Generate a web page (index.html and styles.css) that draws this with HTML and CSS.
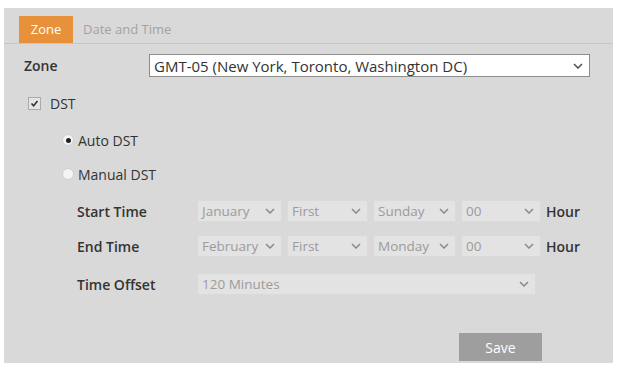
FILE: index.html
```html
<!DOCTYPE html>
<html lang="en">
<head>
    <meta charset="UTF-8">
    <meta name="viewport" content="width=device-width, initial-scale=1.0">
    <title>Zone</title>
    <link rel="stylesheet" href="styles.css">
</head>
<body>
    <div class="panel">
        <div class="tabs">
            <span class="tab active">Zone</span>
            <span class="tab">Date and Time</span>
        </div>
        <div class="form">
            <div class="zone-row">
                <span class="zone-label">Zone</span>
                <div class="select zone-select">
                    <span>GMT-05 (New York, Toronto, Washington DC)</span>
                    <svg class="chevron" width="10" height="6" viewBox="0 0 10 6"><path d="M1 1 L5 5 L9 1" fill="none" stroke="#555" stroke-width="1.6"/></svg>
                </div>
            </div>
            <div class="check-row">
                <span class="checkbox"><svg width="9" height="9" viewBox="0 0 9 9"><path d="M1.5 4.5 L3.6 6.8 L7.5 2" fill="none" stroke="#333" stroke-width="1.6"/></svg></span>
                <span>DST</span>
            </div>
            <div class="radio-row first">
                <span class="radio checked"></span>
                <span>Auto DST</span>
            </div>
            <div class="radio-row">
                <span class="radio"></span>
                <span>Manual DST</span>
            </div>
            <div class="dst-row start">
                <span class="dst-label">Start Time</span>
                <div class="select off month"><span>January</span><svg class="chevron" width="10" height="6" viewBox="0 0 10 6"><path d="M1 1 L5 5 L9 1" fill="none" stroke="#8a8a8a" stroke-width="1.5"/></svg></div>
                <div class="select off week"><span>First</span><svg class="chevron" width="10" height="6" viewBox="0 0 10 6"><path d="M1 1 L5 5 L9 1" fill="none" stroke="#8a8a8a" stroke-width="1.5"/></svg></div>
                <div class="select off day"><span>Sunday</span><svg class="chevron" width="10" height="6" viewBox="0 0 10 6"><path d="M1 1 L5 5 L9 1" fill="none" stroke="#8a8a8a" stroke-width="1.5"/></svg></div>
                <div class="select off hour"><span>00</span><svg class="chevron" width="10" height="6" viewBox="0 0 10 6"><path d="M1 1 L5 5 L9 1" fill="none" stroke="#8a8a8a" stroke-width="1.5"/></svg></div>
                <span class="unit">Hour</span>
            </div>
            <div class="dst-row">
                <span class="dst-label">End Time</span>
                <div class="select off month"><span class="clip">February</span><svg class="chevron" width="10" height="6" viewBox="0 0 10 6"><path d="M1 1 L5 5 L9 1" fill="none" stroke="#8a8a8a" stroke-width="1.5"/></svg></div>
                <div class="select off week"><span>First</span><svg class="chevron" width="10" height="6" viewBox="0 0 10 6"><path d="M1 1 L5 5 L9 1" fill="none" stroke="#8a8a8a" stroke-width="1.5"/></svg></div>
                <div class="select off day"><span>Monday</span><svg class="chevron" width="10" height="6" viewBox="0 0 10 6"><path d="M1 1 L5 5 L9 1" fill="none" stroke="#8a8a8a" stroke-width="1.5"/></svg></div>
                <div class="select off hour"><span>00</span><svg class="chevron" width="10" height="6" viewBox="0 0 10 6"><path d="M1 1 L5 5 L9 1" fill="none" stroke="#8a8a8a" stroke-width="1.5"/></svg></div>
                <span class="unit">Hour</span>
            </div>
            <div class="dst-row offset">
                <span class="dst-label">Time Offset</span>
                <div class="select off offset-select"><span>120 Minutes</span><svg class="chevron" width="10" height="6" viewBox="0 0 10 6"><path d="M1 1 L5 5 L9 1" fill="none" stroke="#8a8a8a" stroke-width="1.5"/></svg></div>
            </div>
            <div class="actions">
                <button class="save">Save</button>
            </div>
        </div>
    </div>
</body>
</html>
```

FILE: styles.css
```css
body {
    margin: 0;
    padding: 8px 5px 2px 4px;
    background-color: #fff;
    font-family: "Open Sans", Arial, sans-serif;
    color: #333;
}
.panel {
    background-color: #d9d9d9;
    height: 355px;
    box-sizing: border-box;
}
.tabs {
    display: flex;
    align-items: flex-end;
    height: 36px;
    padding-left: 15px;
    border-bottom: 1px solid #c6c6c6;
    box-sizing: border-box;
}
.tab {
    font-size: 13px;
    color: #a3a3a3;
    padding: 0 10px;
    height: 27px;
    line-height: 27px;
}
.tab.active {
    background-color: #e8913b;
    color: #fff;
    width: 54px;
    padding: 0;
    text-align: center;
}
.form {
    padding-left: 20px;
}
.zone-row {
    display: flex;
    align-items: center;
    margin-top: 10px;
}
.zone-label {
    width: 125px;
    font-size: 14px;
    font-weight: 600;
}
.select {
    display: flex;
    align-items: center;
    justify-content: space-between;
    box-sizing: border-box;
    height: 22px;
    padding: 0 6px 0 4px;
    overflow: hidden;
    white-space: nowrap;
}
.zone-select {
    width: 441px;
    height: 23px;
    background-color: #fff;
    border: 1px solid #8d8d8d;
    font-size: 15px;
    color: #333;
}
.check-row, .radio-row {
    display: flex;
    align-items: center;
    height: 20px;
    font-size: 14px;
}
.check-row {
    margin-top: 16px;
    padding-left: 4px;
}
.checkbox {
    width: 11px;
    height: 11px;
    border: 1px solid #ababab;
    background-color: #e4e4e4;
    display: flex;
    align-items: center;
    justify-content: center;
    margin-right: 9px;
}
.radio-row {
    padding-left: 38px;
    margin-top: 14px;
}
.radio-row.first {
    margin-top: 17px;
}
.radio {
    width: 10px;
    height: 10px;
    border-radius: 50%;
    background-color: #f4f4f4;
    border: 1px solid #cfcfcf;
    margin-right: 4px;
    display: flex;
    align-items: center;
    justify-content: center;
}
.radio.checked::after {
    content: "";
    width: 5px;
    height: 5px;
    border-radius: 50%;
    background-color: #222;
}
.dst-row {
    display: flex;
    align-items: center;
    gap: 5px;
    padding-left: 53px;
    margin-top: 13px;
}
.dst-row.start {
    margin-top: 16px;
}
.dst-row.offset {
    margin-top: 16px;
}
.dst-label {
    width: 115px;
    font-size: 14px;
    font-weight: 600;
}
.select.off {
    background-color: #e3e3e3;
    border: 1px solid #dadada;
    font-size: 13.5px;
    color: #9b9b9b;
}
.clip {
    width: 58px;
    overflow: hidden;
}
.month { width: 85px; }
.week { width: 81px; }
.day { width: 83px; }
.hour { width: 80px; }
.offset-select { width: 339px; }
.unit {
    font-size: 14px;
    font-weight: 600;
}
.actions {
    display: flex;
    justify-content: flex-end;
    padding-right: 71px;
    margin-top: 38px;
}
.save {
    width: 83px;
    height: 28px;
    border: none;
    background-color: #9e9e9e;
    color: #fff;
    font-family: "Open Sans", Arial, sans-serif;
    font-size: 14px;
}
```
